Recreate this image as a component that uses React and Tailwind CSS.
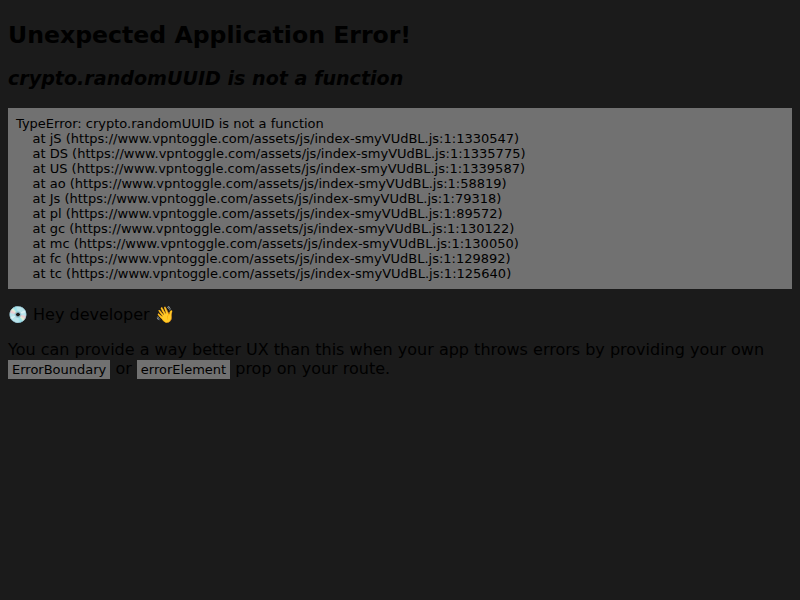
import React from 'react';

const stack = `TypeError: crypto.randomUUID is not a function
    at jS (https://www.vpntoggle.com/assets/js/index-smyVUdBL.js:1:1330547)
    at DS (https://www.vpntoggle.com/assets/js/index-smyVUdBL.js:1:1335775)
    at US (https://www.vpntoggle.com/assets/js/index-smyVUdBL.js:1:1339587)
    at ao (https://www.vpntoggle.com/assets/js/index-smyVUdBL.js:1:58819)
    at Js (https://www.vpntoggle.com/assets/js/index-smyVUdBL.js:1:79318)
    at pl (https://www.vpntoggle.com/assets/js/index-smyVUdBL.js:1:89572)
    at gc (https://www.vpntoggle.com/assets/js/index-smyVUdBL.js:1:130122)
    at mc (https://www.vpntoggle.com/assets/js/index-smyVUdBL.js:1:130050)
    at fc (https://www.vpntoggle.com/assets/js/index-smyVUdBL.js:1:129892)
    at tc (https://www.vpntoggle.com/assets/js/index-smyVUdBL.js:1:125640)`;

const codeCls = "px-1 py-0.5 bg-[rgba(200,200,200,0.5)] text-[13px] font-['DejaVu_Sans',sans-serif]";

export default function App() {
  return (
    <div className="flow-root min-h-screen bg-[#1b1b1b] px-2 text-black font-['DejaVu_Sans',sans-serif]">
      <h2 className="mt-[21px] mb-[19px] text-[23.6px] font-bold leading-[28px]">Unexpected Application Error!</h2>
      <h3 className="mt-[19px] mb-[18px] text-[19.1px] font-bold italic leading-[22px]">crypto.randomUUID is not a function</h3>
      <pre className="my-[13px] whitespace-pre bg-[rgba(200,200,200,0.5)] p-2 text-[13px] leading-[15px] font-['DejaVu_Sans',sans-serif]">{stack}</pre>
      <p className="my-4 text-[16px] leading-[19px]">💿 Hey developer 👋</p>
      <p className="my-4 text-[16px] leading-[19px]">
        You can provide a way better UX than this when your app throws errors by providing your own{' '}
        <code className={codeCls}>ErrorBoundary</code> or{' '}
        <code className={codeCls}>errorElement</code> prop on your route.
      </p>
    </div>
  );
}
